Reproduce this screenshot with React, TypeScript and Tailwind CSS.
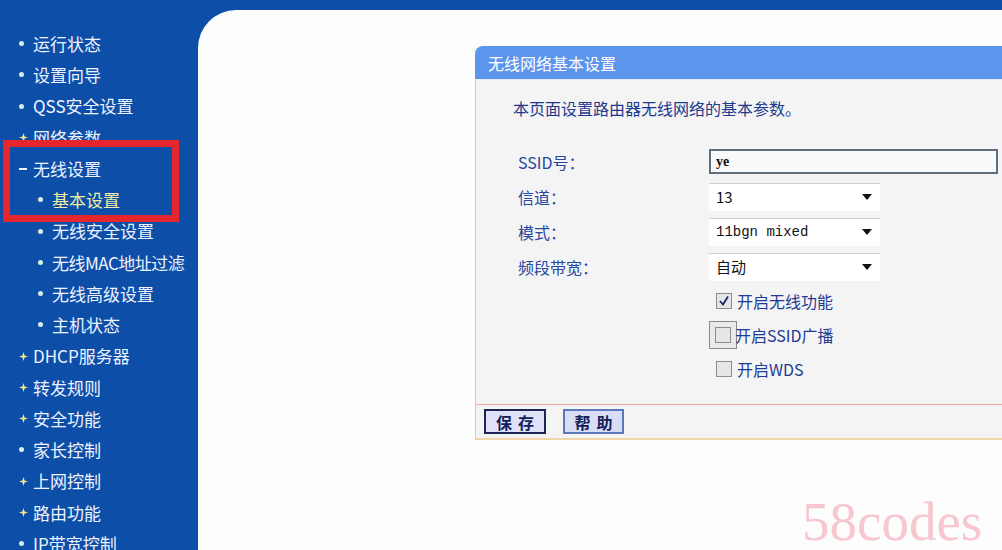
import React from "react";

const FONT = '"Noto Sans CJK SC", "Liberation Sans", sans-serif';

type Item = { label: string; kind: "dot" | "star" | "minus" | "sub"; active?: boolean };

const items: Item[] = [
  { label: "运行状态", kind: "dot" },
  { label: "设置向导", kind: "dot" },
  { label: "QSS安全设置", kind: "dot" },
  { label: "网络参数", kind: "star" },
  { label: "无线设置", kind: "minus" },
  { label: "基本设置", kind: "sub", active: true },
  { label: "无线安全设置", kind: "sub" },
  { label: "无线MAC地址过滤", kind: "sub" },
  { label: "无线高级设置", kind: "sub" },
  { label: "主机状态", kind: "sub" },
  { label: "DHCP服务器", kind: "star" },
  { label: "转发规则", kind: "star" },
  { label: "安全功能", kind: "star" },
  { label: "家长控制", kind: "dot" },
  { label: "上网控制", kind: "star" },
  { label: "路由功能", kind: "star" },
  { label: "IP带宽控制", kind: "dot" },
];

function Bullet({ kind }: { kind: Item["kind"] }) {
  if (kind === "dot" || kind === "sub")
    return <span className="block w-[5px] h-[5px] rounded-full bg-[#d9efe6]" />;
  if (kind === "minus") return <span className="block w-[8px] h-[2px] bg-[#eef3ff]" />;
  return (
    <svg width="9" height="9" viewBox="0 0 10 10" className="block">
      <path d="M5 0 L6.2 3.8 L10 5 L6.2 6.2 L5 10 L3.8 6.2 L0 5 L3.8 3.8 Z" fill="#f3e98a" />
    </svg>
  );
}

function Sidebar() {
  return (
    <aside className="w-[198px] shrink-0 pt-[28px] flex flex-col">
      {items.map((it) => (
        <div
          key={it.label}
          className={
            "h-[31.25px] shrink-0 flex items-center text-[17px] whitespace-nowrap " +
            (it.kind === "sub" ? "pl-[38px]" : "pl-[19px]")
          }
        >
          <span className="w-[14px] flex items-center justify-start">
            <Bullet kind={it.kind} />
          </span>
          <span
            className={
              (it.active ? "text-[#f2efa2]" : "text-[#eef3ff]") +
              (it.label.includes("MAC") ? " tracking-[-0.5px]" : "")
            }
          >
            {it.label}
          </span>
        </div>
      ))}
    </aside>
  );
}

function Arrow() {
  return (
    <svg width="10" height="6" viewBox="0 0 10 6" className="block">
      <path d="M0 0 L10 0 L5 6 Z" fill="#111" />
    </svg>
  );
}

function Select({ value, mono }: { value: string; mono?: boolean }) {
  return (
    <div className="w-[171px] h-[28px] bg-white border-t border-[#cfcfcf] flex items-center justify-between pl-[7px] pr-[8px]">
      <span
        className={mono ? "text-[14px] text-[#111]" : "text-[15px] text-[#111]"}
        style={mono ? { fontFamily: '"Liberation Mono", monospace' } : undefined}
      >
        {value}
      </span>
      <Arrow />
    </div>
  );
}

function Check({ checked, focus, label }: { checked?: boolean; focus?: boolean; label: string }) {
  const box = (
    <span className="w-[16px] h-[16px] border border-[#8d8d8d] bg-[#e6e6e6] flex items-center justify-center">
      {checked && (
        <svg width="12" height="12" viewBox="0 0 12 12">
          <path d="M2 6 L5 9.5 L10 1.5" stroke="#1c2a6a" strokeWidth="1.8" fill="none" />
        </svg>
      )}
    </span>
  );
  return (
    <div className="flex items-center">
      {focus ? (
        <span className="w-[28px] h-[28px] border border-[#8a8a8a] bg-[#eaeaea] flex items-center justify-center -ml-[7px] -mr-[2px]">
          {box}
        </span>
      ) : (
        <span className="mr-[5px]">{box}</span>
      )}
      <span className="text-[16px] text-[#1f3b93]">{label}</span>
    </div>
  );
}

function Panel() {
  return (
    <div className="w-[560px]">
      <div className="h-[34px] bg-[#5b95ec] rounded-tl-[8px] flex items-center pl-[13px] text-[16px] text-white border-b border-[#e3ebf7]">
        无线网络基本设置
      </div>
      <div className="bg-[#f4f4f4] border-l border-[#f0c4a4] border-b-2 border-b-[#f1d6ab]">
        <div className="pl-[37px] pt-[19px] h-[18px] box-content text-[16px] leading-[18px] text-[#1d3a8e]">
          本页面设置路由器无线网络的基本参数。
        </div>
        <div className="pl-[42px] pt-[27px] flex flex-col">
          <div className="h-[35px] flex items-center">
            <span className="w-[191px] text-[16px] text-[#2747a0]">SSID号：</span>
            <div className="w-[289px] h-[25px] border-2 border-[#5f6e7c] bg-[#f8f9fb] flex items-center pl-[5px]">
              <span className="text-[14px] font-bold text-[#111]" style={{ fontFamily: '"Liberation Serif", serif' }}>
                ye
              </span>
            </div>
          </div>
          <div className="h-[35px] flex items-center">
            <span className="w-[191px] text-[16px] text-[#2747a0]">信道：</span>
            <Select value="13" />
          </div>
          <div className="h-[35px] flex items-center">
            <span className="w-[191px] text-[16px] text-[#2747a0]">模式：</span>
            <Select value="11bgn mixed" mono />
          </div>
          <div className="h-[35px] flex items-center">
            <span className="w-[191px] text-[16px] text-[#2747a0]">频段带宽：</span>
            <Select value="自动" />
          </div>
          <div className="h-[34px] flex items-center pl-[198px]">
            <Check checked label="开启无线功能" />
          </div>
          <div className="h-[34px] flex items-center pl-[198px]">
            <Check focus label="开启SSID广播" />
          </div>
          <div className="h-[34px] flex items-center pl-[198px]">
            <Check label="开启WDS" />
          </div>
        </div>
        <div className="h-[18px]" />
        <div className="border-t border-[#f1a9a9] h-[34px] pt-[4px] pl-[8px] flex items-start gap-[17px]">
          <button className="w-[62px] h-[25px] border-2 border-[#1b2556] bg-[#dfe1f8] text-[16px] leading-none font-bold text-[#16205a] tracking-[6px] pl-[6px]">
            保存
          </button>
          <button className="w-[61px] h-[25px] border-2 border-[#5d78b8] bg-[#d9ddf6] text-[16px] leading-none font-bold text-[#16205a] tracking-[6px] pl-[6px]">
            帮助
          </button>
        </div>
      </div>
    </div>
  );
}

export default function App() {
  return (
    <div
      className="relative flex h-[550px] w-[1002px] overflow-hidden bg-[#0c4ea8]"
      style={{ fontFamily: FONT }}
    >
      <Sidebar />
      <main className="flex-1 pt-[10px] flex flex-col">
        <div className="flex-1 bg-[#fdfdfd] rounded-tl-[38px] pt-[36px] pl-[277px] overflow-hidden">
          <Panel />
        </div>
      </main>
      <div className="absolute left-[3px] top-[140px] w-[176px] h-[82px] border-[7px] border-[#e5262c]" />
      <div
        className="absolute left-[802px] top-[494px] text-[55px] leading-none text-[#f7c6ce]"
        style={{ fontFamily: '"Liberation Serif", serif' }}
      >
        58codes
      </div>
    </div>
  );
}
